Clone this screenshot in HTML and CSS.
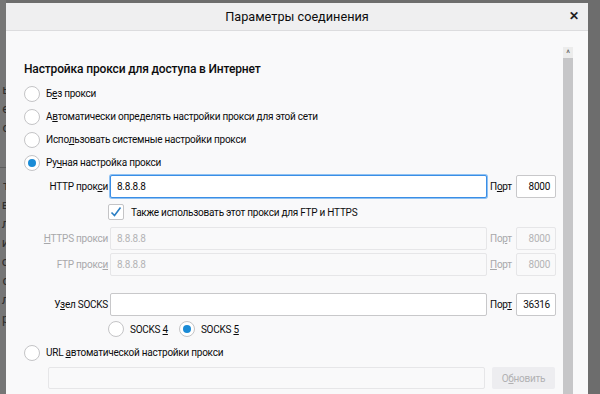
FILE: index.html
```html
<!DOCTYPE html>
<html lang="ru">
<head>
  <meta charset="UTF-8" />
  <title>Параметры соединения</title>
  <link rel="stylesheet" href="styles.css">
</head>
<body>
  <div class="page">
    <div class="backdrop">
      <span>ь</span><span>е</span><span>с</span><span class="rule"></span>
      <span>т</span><span>в</span><span>л</span><span>и</span><span>о</span><span>с</span><span>л</span><span>р</span>
    </div>
    <div class="dialog">
      <div class="dialog-header">
        <span class="title">Параметры соединения</span>
        <span class="close">✕</span>
      </div>
      <div class="dialog-body">
        <div class="content">
          <h2 class="heading">Настройка прокси для доступа в Интернет</h2>
          <label class="radio-row"><span class="radio"></span><span>Б<u>е</u>з прокси</span></label>
          <label class="radio-row"><span class="radio"></span><span>А<u>в</u>томатически определять настройки прокси для этой сети</span></label>
          <label class="radio-row"><span class="radio"></span><span>Испо<u>л</u>ьзовать системные настройки прокси</span></label>
          <label class="radio-row"><span class="radio checked"></span><span>Ру<u>ч</u>ная настройка прокси</span></label>

          <div class="proxy-row">
            <span class="field-label">HTTP прок<u>с</u>и</span>
            <div class="input focused">8.8.8.8</div>
            <span class="port-label">П<u>о</u>рт</span>
            <div class="input port">8000</div>
          </div>
          <div class="check-row">
            <span class="checkbox">
              <svg width="14" height="14" viewBox="0 0 14 14"><path d="M2.5 7.5 L5.5 10.5 L11.5 2.5" fill="none" stroke="#2b7fc4" stroke-width="1.6"/></svg>
            </span>
            <span>Также использовать этот прокси <u>д</u>ля FTP и HTTPS</span>
          </div>
          <div class="proxy-row disabled">
            <span class="field-label"><u>H</u>TTPS прокси</span>
            <div class="input">8.8.8.8</div>
            <span class="port-label">По<u>р</u>т</span>
            <div class="input port">8000</div>
          </div>
          <div class="proxy-row disabled">
            <span class="field-label">FTP прокс<u>и</u></span>
            <div class="input">8.8.8.8</div>
            <span class="port-label"><u>П</u>орт</span>
            <div class="input port">8000</div>
          </div>
          <div class="proxy-row socks">
            <span class="field-label">У<u>з</u>ел SOCKS</span>
            <div class="input"></div>
            <span class="port-label">Пор<u>т</u></span>
            <div class="input port">36316</div>
          </div>
          <div class="socks-row">
            <label class="socks-opt"><span class="radio"></span><span>SOCKS <u>4</u></span></label>
            <label class="socks-opt"><span class="radio checked"></span><span>SOCKS <u>5</u></span></label>
          </div>
          <label class="radio-row"><span class="radio"></span><span>URL <u>а</u>втоматической настройки прокси</span></label>
          <div class="url-row">
            <div class="input url"></div>
            <div class="button"><span>О<u>б</u>новить</span></div>
          </div>
        </div>
        <div class="scrollbar">
          <div class="scroll-up">^</div>
          <div class="scroll-track"></div>
        </div>
      </div>
    </div>
  </div>
</body>
</html>
```
FILE: styles.css
```css
* {
  box-sizing: border-box;
}
body {
  margin: 0;
  background: #6d6d6d;
  font-family: Roboto, sans-serif;
  font-size: 10px;
  letter-spacing: -0.25px;
  color: #0c0c0d;
  overflow: hidden;
}
u {
  text-decoration: underline;
  text-underline-offset: 1px;
}
.page {
  display: flex;
  height: 394px;
}
.backdrop {
  width: 6px;
  flex-shrink: 0;
  background: #767676;
  display: flex;
  flex-direction: column;
  align-items: flex-end;
  padding-top: 80px;
  overflow: hidden;
  color: #2e2e2e;
  font-size: 13px;
  line-height: 19px;
}
.backdrop span {
  margin-right: -3px;
}
.backdrop .rule {
  width: 6px;
  height: 1px;
  margin: 30px 0 8px;
  background: #5e5e5e;
}
.dialog {
  width: 582px;
  margin-top: 3px;
  background: #f9f9fa;
  display: flex;
  flex-direction: column;
}
.dialog-header {
  height: 28px;
  background: #efeff0;
  border-bottom: 1px solid #dcdcde;
  display: flex;
  align-items: center;
  justify-content: center;
  position: relative;
}
.title {
  font-size: 12.7px;
  letter-spacing: 0;
}
.close {
  position: absolute;
  right: 9px;
  top: 6px;
  font-size: 12px;
  font-weight: bold;
  color: #222;
}
.dialog-body {
  flex: 1;
  display: flex;
}
.content {
  flex: 1;
  padding: 29px 0 0 18px;
}
.heading {
  margin: 0 0 3px;
  font-size: 12px;
  font-weight: 500;
  letter-spacing: -0.15px;
  line-height: 19px;
}
.radio-row {
  display: flex;
  align-items: center;
  height: 23px;
  gap: 6px;
}
.radio {
  width: 16px;
  height: 16px;
  border-radius: 50%;
  border: 1px solid #c4c4c6;
  background: #fff;
  display: inline-flex;
  align-items: center;
  justify-content: center;
  flex-shrink: 0;
}
.radio.checked::after {
  content: '';
  width: 8px;
  height: 8px;
  border-radius: 50%;
  background: #1a8bd6;
}
.proxy-row {
  display: grid;
  grid-template-columns: 86px 377px 29px 40px;
  align-items: center;
  height: 23px;
  margin-top: 1px;
}
.proxy-row.disabled {
  margin-top: 3px;
  color: #a8a8aa;
}
.proxy-row.socks {
  margin-top: 17px;
}
.field-label {
  text-align: right;
  padding-right: 2px;
  white-space: nowrap;
}
.port-label {
  padding-left: 3px;
}
.input {
  height: 23px;
  background: #fff;
  border: 1px solid #c8c8ca;
  border-radius: 2px;
  padding: 0 6px;
  display: flex;
  align-items: center;
}
.input.focused {
  border-color: #3a8ee6;
  box-shadow: 0 0 0 1px #8fc1f2;
}
.input.port {
  justify-content: flex-end;
  padding-right: 5px;
}
.disabled .input {
  background: #f9f9fa;
  border-color: #e6e6e8;
  color: #b4b4b6;
}
.check-row {
  display: flex;
  align-items: center;
  gap: 7px;
  height: 24px;
  margin-top: 2px;
  padding-left: 84px;
}
.checkbox {
  width: 16px;
  height: 16px;
  border: 1px solid #c4c4c6;
  background: #fff;
  border-radius: 2px;
  display: inline-flex;
  align-items: center;
  justify-content: center;
}
.socks-row {
  display: flex;
  align-items: center;
  gap: 11px;
  height: 24px;
  margin-top: 1px;
  padding-left: 84px;
}
.socks-opt {
  display: flex;
  align-items: center;
  gap: 6px;
}
.url-row {
  display: flex;
  gap: 7px;
  margin-top: 3px;
  padding-left: 24px;
}
.input.url {
  width: 437px;
  height: 22px;
  background: #f9f9fa;
  border-color: #e6e6e8;
}
.button {
  width: 63px;
  height: 22px;
  background: #ededf0;
  color: #b1b1b3;
  border-radius: 2px;
  display: flex;
  align-items: center;
  justify-content: center;
}
.scrollbar {
  width: 10px;
  margin: 16px 15px 0 0;
  display: flex;
  flex-direction: column;
}
.scroll-up {
  height: 11px;
  background: #ececec;
  font-size: 9px;
  line-height: 13px;
  text-align: center;
  color: #555;
}
.scroll-track {
  flex: 1;
  background: #c6c6c8;
}
```
